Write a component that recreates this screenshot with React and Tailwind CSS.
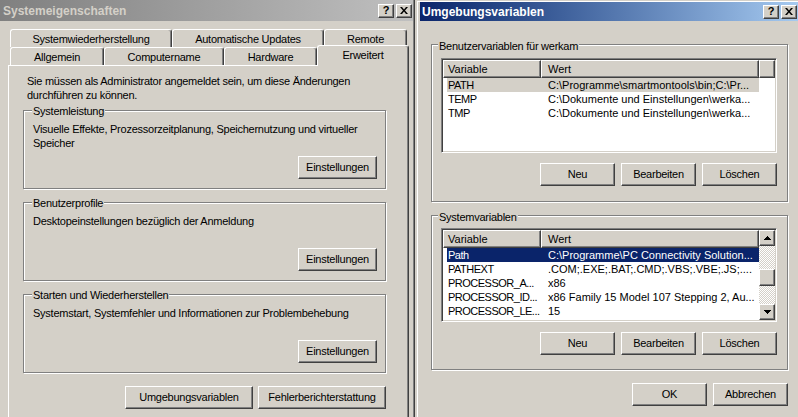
import React from 'react';

// Win2000 bevels
const raised =
  'bg-[#D4D0C8] border border-t-white border-l-white border-r-[#404040] border-b-[#404040] shadow-[inset_-1px_-1px_0_#808080]';
const sunken =
  'bg-white border border-t-[#808080] border-l-[#808080] border-r-white border-b-white shadow-[inset_1px_1px_0_#404040,inset_-1px_-1px_0_#D4D0C8] p-[1px]';
const tabBase =
  'border-t border-l border-r border-t-white border-l-white border-r-[#404040] shadow-[inset_-1px_0_0_#808080] rounded-t-[3px] flex items-center justify-center';

function Button({ className = 'w-[75px]', children }) {
  return (
    <button
      type="button"
      className={`${raised} ${className} h-[23px] shrink-0 flex items-center justify-center text-[11px] leading-none text-black`}
    >
      {children}
    </button>
  );
}

function CaptionButtons() {
  return (
    <div className="flex gap-[2px]">
      <div className={`${raised} w-[16px] h-[14px] flex items-center justify-center text-[11px] font-bold leading-none tracking-normal`}>
        ?
      </div>
      <div className={`${raised} w-[16px] h-[14px] flex items-center justify-center`}>
        <svg width="8" height="7" viewBox="0 0 8 7">
          <path d="M0 0h2l2 2.5L6 0h2L5 3.5 8 7H6L4 4.5 2 7H0l3-3.5z" fill="#000" />
        </svg>
      </div>
    </div>
  );
}

function Group({ label, labelClass, className, children }) {
  return (
    <div className={`border border-[#808080] shadow-[inset_1px_1px_0_#fff,1px_1px_0_#fff] flex flex-col ${className}`}>
      <div className={`${labelClass} px-[1px] w-fit bg-[#D4D0C8] leading-[14px]`}>{label}</div>
      {children}
    </div>
  );
}

function SettingsGroup({ label, text }) {
  return (
    <Group label={label} labelClass="-mt-[7px] ml-[8px]" className="ml-[14px] w-[363px] h-[79px] mt-[13px] first:mt-[8px]">
      <div className="mt-[4px] ml-[9px] leading-[14px]">{text}</div>
      <div className="mt-auto self-end mr-[8px] mb-[9px]">
        <Button className="w-[79px]">Einstellungen</Button>
      </div>
    </Group>
  );
}

function LeftWindow() {
  return (
    <div className="w-[415px] h-full shrink-0 flex flex-col border-r border-r-[#404040] shadow-[inset_-1px_0_0_#808080] pr-[1px]">
      <div className="h-[21px] shrink-0 flex items-center justify-between pl-[3px] pr-[1px] bg-linear-to-r from-[#808080] to-[#C0C0C0]">
        <span className="text-[12px] font-bold tracking-normal text-[#D4D0C8]">Systemeigenschaften</span>
        <CaptionButtons />
      </div>

      <div className="flex-1 min-h-0 flex flex-col pl-[8px] pt-[8px]">
        {/* back row of tabs */}
        <div className="flex ml-[2px] h-[18px] shrink-0">
          <div className={`${tabBase} w-[162px] h-[18px] pt-[1px]`}>Systemwiederherstellung</div>
          <div className={`${tabBase} w-[152px] h-[18px] pt-[1px]`}>Automatische Updates</div>
          <div className={`${tabBase} w-[83px] h-[18px] pt-[1px]`}>Remote</div>
        </div>
        {/* front row of tabs */}
        <div className="flex items-start ml-[2px] h-[18px] shrink-0">
          <div className={`${tabBase} w-[94px] h-[18px] pt-[2px]`}>Allgemein</div>
          <div className={`${tabBase} w-[120px] h-[18px] pt-[2px]`}>Computername</div>
          <div className={`${tabBase} w-[93px] h-[18px] pt-[2px]`}>Hardware</div>
          <div className={`${tabBase} relative z-10 bg-[#D4D0C8] w-[92px] h-[21px] -mt-[2px] pb-[2px]`}>Erweitert</div>
        </div>

        {/* tab page */}
        <div className="flex-1 w-[401px] flex flex-col border-t border-l border-r border-t-white border-l-white border-r-[#404040] shadow-[inset_-1px_0_0_#808080]">
          <div className="pl-[18px] pt-[8px] leading-[14px]">
            Sie müssen als Administrator angemeldet sein, um diese Änderungen
            <br />
            durchführen zu können.
          </div>

          <div className="flex flex-col">
            <SettingsGroup
              label="Systemleistung"
              text={
                <>
                  Visuelle Effekte, Prozessorzeitplanung, Speichernutzung und virtueller
                  <br />
                  Speicher
                </>
              }
            />
            <SettingsGroup label="Benutzerprofile" text="Desktopeinstellungen bezüglich der Anmeldung" />
            <SettingsGroup
              label="Starten und Wiederherstellen"
              text="Systemstart, Systemfehler und Informationen zur Problembehebung"
            />
          </div>

          <div className="ml-[14px] w-[363px] mt-[13px] flex justify-end gap-[5px]">
            <Button className="w-[128px]">Umgebungsvariablen</Button>
            <Button className="w-[128px]">Fehlerberichterstattung</Button>
          </div>
        </div>
      </div>
    </div>
  );
}

function HeaderCell({ className, children }) {
  return (
    <div className={`${raised} ${className} h-[18px] shrink-0 flex items-center pt-[1px] leading-none`}>{children}</div>
  );
}

function Row({ name, value, sel }) {
  const tone = sel === 'focus' ? 'bg-[#0A246A] text-white' : sel === 'idle' ? 'bg-[#D4D0C8]' : '';
  return (
    <div className={`ml-[4px] w-[312px] h-[14px] shrink-0 flex leading-[14px] whitespace-nowrap ${tone}`}>
      <div className="w-[94px] pl-[1px] overflow-hidden tracking-[-0.5px]">{name}</div>
      <div className="flex-1 pl-[7px] overflow-hidden">{value}</div>
    </div>
  );
}

function ScrollBar() {
  return (
    <div className="w-[16px] shrink-0 flex flex-col">
      <div className={`${raised} h-[16px] shrink-0 flex items-center justify-center`}>
        <svg width="7" height="4" viewBox="0 0 7 4">
          <path d="M3 0h1v1h1v1h1v1h1v1H0V3h1V2h1V1h1z" fill="#000" />
        </svg>
      </div>
      <div className="flex-1 bg-[image:conic-gradient(#fff_25%,#D4D0C8_0_50%,#fff_0_75%,#D4D0C8_0)] bg-[length:2px_2px]">
        <div className={`${raised} mt-[23px] h-[17px]`} />
      </div>
      <div className={`${raised} h-[16px] shrink-0 flex items-center justify-center`}>
        <svg width="7" height="4" viewBox="0 0 7 4">
          <path d="M0 0h7v1H6v1H5v1H4v1H3V3H2V2H1V1H0z" fill="#000" />
        </svg>
      </div>
    </div>
  );
}

const userVars = [
  ['PATH', 'C:\\Programme\\smartmontools\\bin;C:\\Pr...', 'idle'],
  ['TEMP', 'C:\\Dokumente und Einstellungen\\werka...'],
  ['TMP', 'C:\\Dokumente und Einstellungen\\werka...'],
];

const systemVars = [
  ['Path', 'C:\\Programme\\PC Connectivity Solution...', 'focus'],
  ['PATHEXT', '.COM;.EXE;.BAT;.CMD;.VBS;.VBE;.JS;....'],
  ['PROCESSOR_A...', 'x86'],
  ['PROCESSOR_ID...', 'x86 Family 15 Model 107 Stepping 2, Au...'],
  ['PROCESSOR_LE...', '15'],
];

function RightWindow() {
  return (
    <div className="flex-1 h-full ml-[2px] mt-[1px] border-l border-t border-white pl-[2px] flex flex-col">
      <div className="h-[19px] shrink-0 flex items-center justify-between pl-[2px] pr-[1px] bg-linear-to-r from-[#0A246A] to-[#A6CAF0]">
        <span className="text-[12px] font-bold tracking-normal text-white">Umgebungsvariablen</span>
        <CaptionButtons />
      </div>

      <div className="flex-1 pl-[11px] pt-[23px] flex flex-col">
        <Group label="Benutzervariablen für werkam" labelClass="-mt-[6px] ml-[6px]" className="w-[357px] h-[158px]">
          <div className={`${sunken} ml-[9px] mt-[5px] w-[336px] h-[95px] flex flex-col overflow-hidden tracking-normal`}>
            <div className="flex">
              <HeaderCell className="w-[98px] pl-[4px]">Variable</HeaderCell>
              <HeaderCell className="w-[218px] pl-[6px]">Wert</HeaderCell>
              <HeaderCell className="flex-1" />
            </div>
            {userVars.map(([n, v, s]) => (
              <Row key={n} name={n} value={v} sel={s} />
            ))}
          </div>
          <div className="ml-[9px] mt-[10px] w-[336px] flex justify-end gap-[6px]">
            <Button>Neu</Button>
            <Button>Bearbeiten</Button>
            <Button>Löschen</Button>
          </div>
        </Group>

        <Group label="Systemvariablen" labelClass="-mt-[6px] ml-[6px]" className="w-[357px] h-[155px] mt-[13px]">
          <div className={`${sunken} ml-[9px] mt-[4px] w-[336px] h-[94px] flex overflow-hidden tracking-normal`}>
            <div className="flex-1 flex flex-col overflow-hidden">
              <div className="flex">
                <HeaderCell className="w-[98px] pl-[4px]">Variable</HeaderCell>
                <HeaderCell className="w-[218px] pl-[6px]">Wert</HeaderCell>
              </div>
              {systemVars.map(([n, v, s]) => (
                <Row key={n} name={n} value={v} sel={s} />
              ))}
            </div>
            <ScrollBar />
          </div>
          <div className="ml-[9px] mt-[10px] w-[336px] flex justify-end gap-[6px]">
            <Button>Neu</Button>
            <Button>Bearbeiten</Button>
            <Button>Löschen</Button>
          </div>
        </Group>

        <div className="w-[357px] mt-[13px] flex justify-end gap-[6px]">
          <Button>OK</Button>
          <Button>Abbrechen</Button>
        </div>
      </div>
    </div>
  );
}

export default function App() {
  return (
    <div className="w-[798px] h-[417px] overflow-hidden flex bg-[#D4D0C8] text-[11px] text-black tracking-[-0.25px] font-['Liberation_Sans',Arial,sans-serif]">
      <LeftWindow />
      <RightWindow />
    </div>
  );
}
